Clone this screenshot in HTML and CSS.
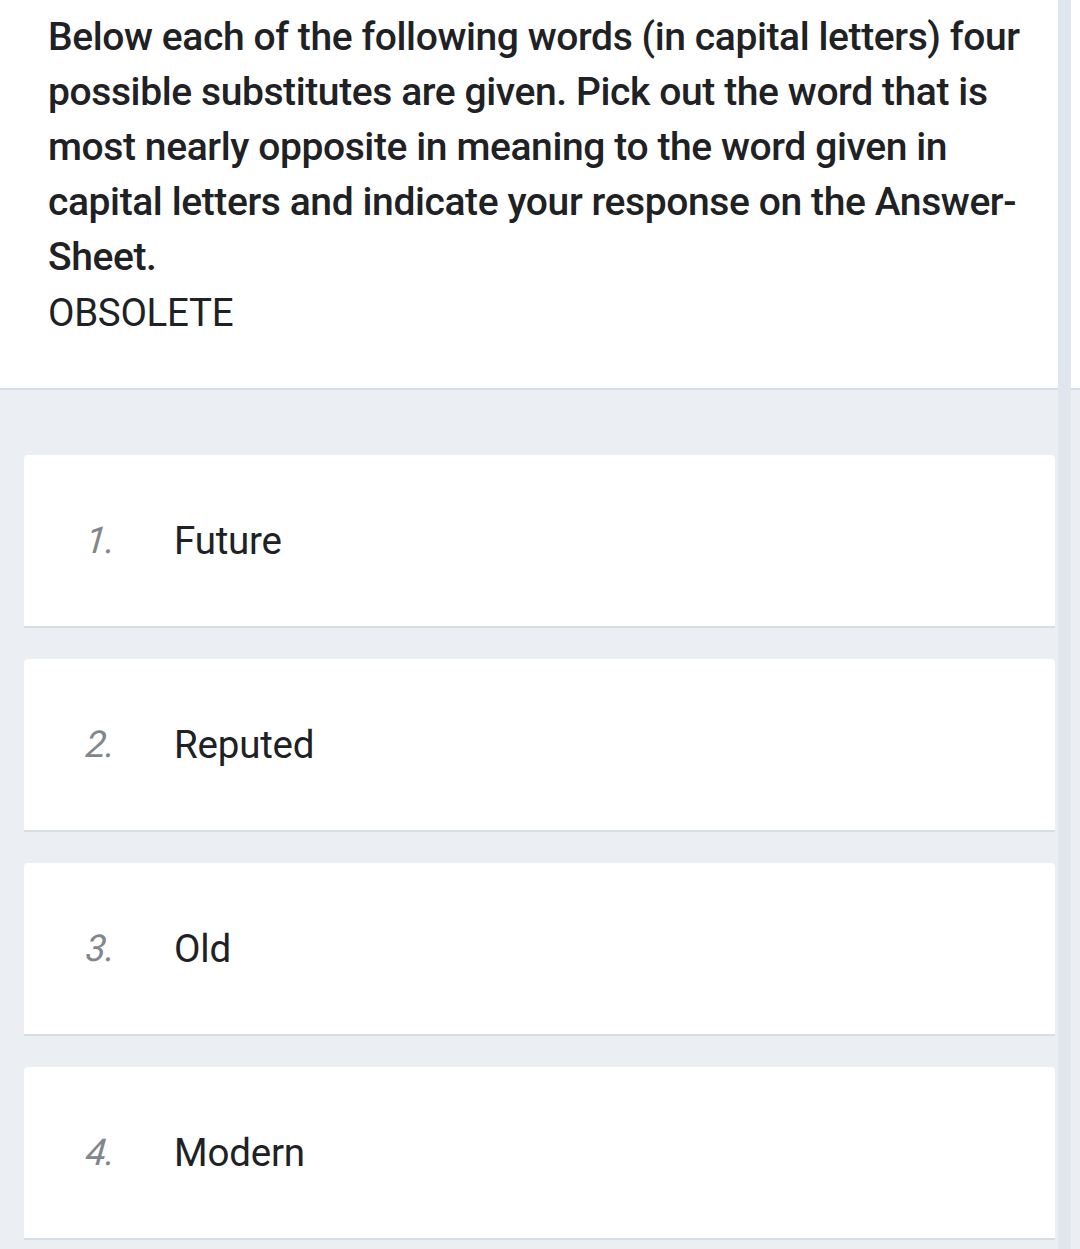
FILE: index.html
```html
<!DOCTYPE html>
<html>
<head>
<meta charset="utf-8">
<link rel="stylesheet" href="styles.css">
</head>
<body>
<div class="page">
  <header class="question">
    <p class="prompt">Below each of the following words (in capital letters) four possible substitutes are given. Pick out the word that is most nearly opposite in meaning to the word given in capital letters and indicate your response on the Answer-Sheet.</p>
    <p class="word">OBSOLETE</p>
  </header>
  <main class="options">
    <div class="option"><span class="num">1.</span><span class="label">Future</span></div>
    <div class="option"><span class="num">2.</span><span class="label">Reputed</span></div>
    <div class="option"><span class="num">3.</span><span class="label">Old</span></div>
    <div class="option"><span class="num">4.</span><span class="label">Modern</span></div>
  </main>
</div>
<div class="scrollbar"></div>
</body>
</html>
```
FILE: styles.css
```css
html, body {
  margin: 0;
  padding: 0;
}
body {
  background: #ebeff3;
  font-family: Roboto, "Liberation Sans", sans-serif;
  color: #202124;
  width: 1080px;
  height: 1249px;
  overflow: hidden;
  position: relative;
}
.question {
  background: #ffffff;
  padding: 10px 40px 48px 48px;
  border-bottom: 2px solid #d6dde3;
}
.prompt {
  margin: 0;
  font-size: 39px;
  font-weight: 500;
  line-height: 55px;
  letter-spacing: -0.4px;
}
.word {
  margin: 0;
  font-size: 38.5px;
  font-weight: 400;
  line-height: 55px;
  letter-spacing: -0.3px;
}
.options {
  display: flex;
  flex-direction: column;
  gap: 31px;
  padding: 65px 25px 0 24px;
}
.option {
  background: #ffffff;
  height: 171px;
  border-radius: 4px 4px 0 0;
  border-bottom: 2px solid #d6dde3;
  display: flex;
  align-items: center;
  padding-left: 62px;
}
.num {
  width: 88px;
  font-size: 37px;
  font-style: italic;
  color: #80868b;
  display: inline-block;
  transform: skewX(-6deg);
}
.label {
  font-size: 38.5px;
  color: #202124;
  letter-spacing: -0.2px;
}
.scrollbar {
  position: absolute;
  top: 0;
  left: 1058px;
  width: 13px;
  height: 1249px;
  background: #dfe6ee;
}
```
